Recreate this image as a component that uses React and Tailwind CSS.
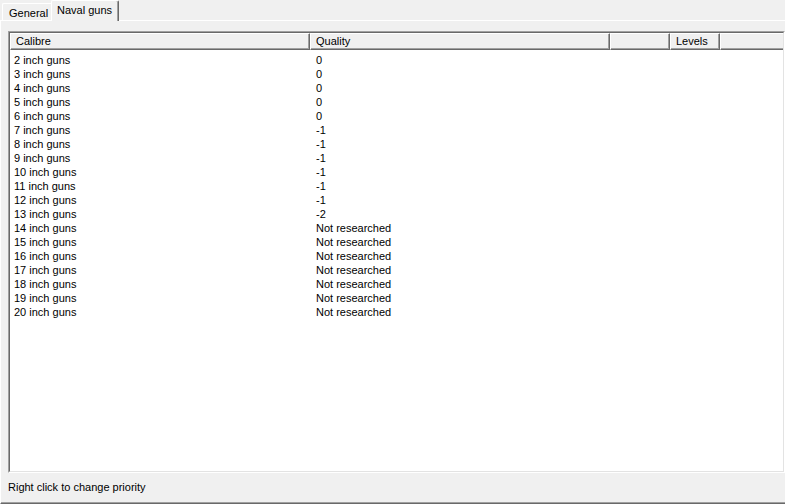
const rows = [
  ["2 inch guns", "0"],
  ["3 inch guns", "0"],
  ["4 inch guns", "0"],
  ["5 inch guns", "0"],
  ["6 inch guns", "0"],
  ["7 inch guns", "-1"],
  ["8 inch guns", "-1"],
  ["9 inch guns", "-1"],
  ["10 inch guns", "-1"],
  ["11 inch guns", "-1"],
  ["12 inch guns", "-1"],
  ["13 inch guns", "-2"],
  ["14 inch guns", "Not researched"],
  ["15 inch guns", "Not researched"],
  ["16 inch guns", "Not researched"],
  ["17 inch guns", "Not researched"],
  ["18 inch guns", "Not researched"],
  ["19 inch guns", "Not researched"],
  ["20 inch guns", "Not researched"],
];

function HeaderCell({ w, children, last }) {
  return (
    <div
      className={
        (last
          ? "flex-1 border-l border-t border-b border-l-white border-t-white border-b-[#696969] shadow-[inset_0_-1px_0_#a0a0a0]"
          : "border border-l-white border-t-white border-r-[#696969] border-b-[#696969] shadow-[inset_-1px_-1px_0_#a0a0a0]") +
        " h-[17px] pl-[5px] leading-[14px] whitespace-nowrap overflow-hidden " +
        (w || "")
      }
    >
      {children}
    </div>
  );
}

export default function App() {
  return (
    <div className="w-[785px] h-[504px] overflow-hidden bg-[#f0f0f0] flex flex-col text-[11px] text-black [font-family:'Liberation_Sans',Arial,sans-serif]">
      {/* Tab strip */}
      <div className="h-[21px] flex items-end shrink-0">
        <div className="w-[2px] h-px bg-white" />
        <div className="w-[49px] h-[18px] border-l border-t border-b border-white pl-[6px] pt-[2px] leading-[14px] rounded-tl-[2px]">
          General
        </div>
        <div className="w-[68px] h-[21px] border-l border-t border-r border-l-white border-t-white border-r-[#696969] shadow-[inset_-1px_0_0_#a0a0a0] pl-[5px] pt-[2px] leading-[14px] rounded-tl-[2px] rounded-tr-[2px]">
          Naval guns
        </div>
        <div className="flex-1 h-px bg-white" />
      </div>

      {/* Tab panel */}
      <div className="flex-1 flex flex-col border-l border-b border-l-white border-b-[#696969] shadow-[inset_0_-1px_0_#a0a0a0] pl-[7px] pt-[10px]">
        <div className="w-[777px] h-[442px] border border-t-[#a0a0a0] border-l-[#a0a0a0] border-r-white border-b-white">
          <div className="w-full h-full flex flex-col bg-white border border-t-[#696969] border-l-[#696969] border-r-[#e3e3e3] border-b-[#e3e3e3]">
            <div className="flex bg-[#f0f0f0] shrink-0">
              <HeaderCell w="w-[300px]">Calibre</HeaderCell>
              <HeaderCell w="w-[300px]">Quality</HeaderCell>
              <HeaderCell w="w-[60px]"></HeaderCell>
              <HeaderCell w="w-[50px]">Levels</HeaderCell>
              <HeaderCell last></HeaderCell>
            </div>
            <div className="pt-[3px] flex flex-col">
              {rows.map(([c, q]) => (
                <div key={c} className="flex h-[14px] leading-[14px] whitespace-nowrap">
                  <div className="w-[300px] pl-[4px]">{c}</div>
                  <div className="w-[300px] pl-[6px]">{q}</div>
                </div>
              ))}
            </div>
          </div>
        </div>
        <div className="pt-[7px] leading-[14px]">Right click to change priority</div>
      </div>
    </div>
  );
}
